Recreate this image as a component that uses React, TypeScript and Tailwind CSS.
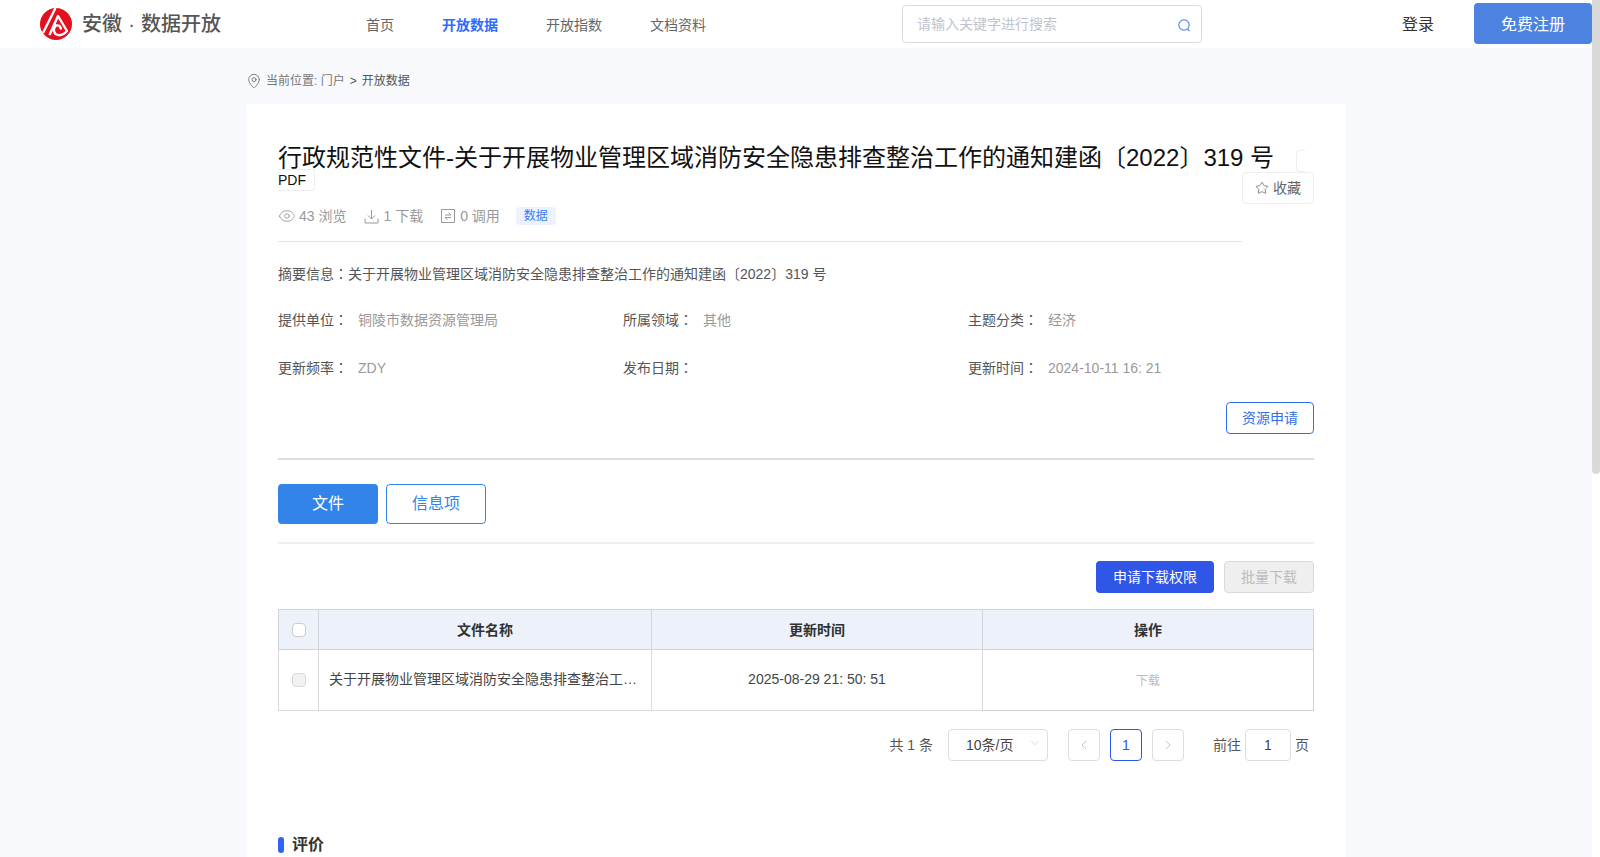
import { Eye, ChevronLeft, ChevronRight, ChevronDown, Star, MapPin } from "lucide-react";

function Logo() {
  return (
    <svg width="32" height="32" viewBox="0 0 32 32" className="shrink-0">
      <circle cx="16" cy="16" r="16" fill="#e60f1e" />
      <path d="M15.5 0 L3 25" stroke="#fff" strokeWidth="2.4" fill="none" />
      <path d="M9.5 27 L18 8 L27 23 Q21 29.5 15.5 26 Q12 21 16 17.5 Q20.5 16.5 21 21.5" stroke="#fff" strokeWidth="2.4" fill="none" strokeLinejoin="round" />
    </svg>
  );
}

function Colon() {
  return <span className="font-['Noto_Sans_CJK_TC']">：</span>;
}

function Info({ label, value }: { label: string; value?: string }) {
  return (
    <div className="flex items-center text-sm">
      <span className="w-20 text-[#555]">
        {label}
        <Colon />
      </span>
      <span className="text-[#999]">{value}</span>
    </div>
  );
}

export default function App() {
  return (
    <div className="flex h-[857px] w-[1600px] overflow-hidden bg-white font-['Liberation_Sans','Noto_Sans_CJK_SC',sans-serif]">
      <div className="flex h-full w-[1592px] flex-col bg-[#f7f9fd]">
        <header className="flex h-12 shrink-0 items-center bg-white pl-10">
          <Logo />
          <div className="ml-2.5 flex w-[136px] items-center text-xl font-medium whitespace-nowrap text-[#555]">
            <span>安徽</span>
            <span className="w-[19px] shrink-0 text-center">·</span>
            <span>数据开放</span>
          </div>
          <nav className="ml-[148px] flex gap-12 pt-0.5 text-sm text-[#666]">
            <span>首页</span>
            <span className="font-bold text-[#2f6bff]">开放数据</span>
            <span>开放指数</span>
            <span>文档资料</span>
          </nav>
          <div className="ml-[196px] flex h-[38px] w-[300px] items-center rounded border border-[#d8dae0] pr-[10px] pl-[14px]">
            <input className="w-full text-sm outline-none placeholder:text-[#c0c4cc]" placeholder="请输入关键字进行搜索" />
            <svg width="14" height="14" viewBox="0 0 14 14" fill="none" stroke="#5b8def" strokeWidth="1.2" className="mt-px shrink-0">
              <circle cx="7" cy="7" r="5.2" />
              <path d="M10.5 11 L12.5 13" />
            </svg>
          </div>
          <span className="ml-[200px] pt-px text-base text-[#333]">登录</span>
          <button className="ml-10 h-[41px] w-[118px] -translate-y-px rounded bg-[#4d83e0] pt-[3px] text-base text-white">免费注册</button>
        </header>

        <div className="ml-[246px] w-[1100px]">
          <div className="flex h-14 items-center pt-[10px] text-xs text-[#777]">
            <MapPin size={16} strokeWidth={1.2} className="mr-[4px] text-[#666]" />
            <span>当前位置: 门户</span>
            <span className="mx-[5px] text-[#555]">&gt;</span>
            <span className="text-[#555]">开放数据</span>
          </div>

          <div className="bg-white px-8 pt-[45px]">
            <h1 className="text-2xl leading-[18px] font-normal text-[#111]">
              行政规范性文件-关于开展物业管理区域消防安全隐患排查整治工作的通知建函〔2022〕319 号{" "}
              <span className="ml-[22px] rounded border border-[#eee] px-2 py-0.5 text-sm leading-none [box-decoration-break:slice]">
                <wbr />
                PDF
              </span>
            </h1>

            <div className="flex items-start justify-between">
              <div className="w-[964px] border-b border-[#e4e4e4] pt-[18px] pb-[14px]">
                <div className="flex h-[22px] items-center text-sm text-[#999]">
                  <Eye size={18} strokeWidth={1.2} className="mr-[3px]" />
                  <span>43 浏览</span>
                  <svg width="15" height="15" viewBox="0 0 15 15" fill="none" stroke="#999" strokeWidth="1" className="mr-1 ml-[18px]">
                    <path d="M7.5 1 V10 M4 6.5 L7.5 10 L11 6.5 M1 9.5 V14 H14 V9.5" />
                  </svg>
                  <span>1 下载</span>
                  <svg width="14" height="14" viewBox="0 0 14 14" fill="none" stroke="#999" strokeWidth="1" className="mr-[5px] ml-[18px]">
                    <path d="M.5.5 H13.5 V13.5 H.5 Z M4 6 H10 L7.5 3.5 M10 8.5 H4 L6.5 11" />
                  </svg>
                  <span>0 调用</span>
                  <span className="ml-4 flex h-[18px] w-10 items-center justify-center rounded-sm bg-[#ecf3ff] text-xs text-[#3b7cf0]">数据</span>
                </div>
              </div>
              <button className="-mt-[15px] flex h-8 w-[72px] items-center justify-center gap-1 rounded-sm border border-[#eee] text-sm text-[#666]">
                <Star size={14} strokeWidth={1.3} />
                收藏
              </button>
            </div>

            <p className="mt-[21px] text-sm leading-5 text-[#555]">
              摘要信息
              <Colon />
              关于开展物业管理区域消防安全隐患排查整治工作的通知建函〔2022〕319 号
            </p>

            <div className="mt-[25px] grid grid-cols-[345px_345px_346px] gap-y-[27px] leading-5">
              <Info label="提供单位" value="铜陵市数据资源管理局" />
              <Info label="所属领域" value="其他" />
              <Info label="主题分类" value="经济" />
              <Info label="更新频率" value="ZDY" />
              <Info label="发布日期" />
              <Info label="更新时间" value="2024-10-11 16: 21" />
            </div>

            <div className="mt-6 flex justify-end border-b-2 border-[#ddd] pb-6">
              <button className="h-8 w-[88px] rounded-sm border border-[#2f6fed] text-sm text-[#2f6fed]">资源申请</button>
            </div>

            <div className="mt-6 flex gap-2 border-b-2 border-[#eee] pb-[18px]">
              <button className="h-10 w-[100px] rounded bg-[#3384e8] text-base text-white">文件</button>
              <button className="h-10 w-[100px] rounded border border-[#3384e8] text-base text-[#3384e8]">信息项</button>
            </div>

            <div className="mt-[17px] flex justify-end gap-2.5">
              <button className="h-8 w-[118px] rounded-sm bg-[#3056e8] text-sm text-white">申请下载权限</button>
              <button className="h-8 w-[90px] rounded-sm border border-[#d9d9d9] bg-[#efefef] text-sm text-[#bbb]">批量下载</button>
            </div>

            <table className="mt-4 w-[1035px] table-fixed border-collapse text-sm">
              <colgroup>
                <col className="w-[40px]" />
                <col className="w-[333px]" />
                <col className="w-[331px]" />
                <col className="w-[331px]" />
              </colgroup>
              <thead>
                <tr className="h-10 bg-[#edf1fa] font-bold text-[#303133]">
                  <th className="border border-[#d0d4dc]">
                    <span className="mx-auto block h-3.5 w-3.5 rounded-sm border border-[#ccc] bg-white" />
                  </th>
                  <th className="border border-[#d0d4dc]">文件名称</th>
                  <th className="border border-[#d0d4dc]">更新时间</th>
                  <th className="border border-[#d0d4dc]">操作</th>
                </tr>
              </thead>
              <tbody>
                <tr className="h-[61px] text-center text-[#444]">
                  <td className="border border-[#d8dae0]">
                    <span className="mx-auto block h-3.5 w-3.5 rounded-sm border border-[#d9d9d9] bg-[#f2f2f2]" />
                  </td>
                  <td className="truncate border border-[#d8dae0] px-2.5 pb-0.5 text-left">关于开展物业管理区域消防安全隐患排查整治工作的通知建函〔2022〕319 号</td>
                  <td className="border border-[#d8dae0] pb-0.5">2025-08-29 21: 50: 51</td>
                  <td className="border border-[#d0d0d0] pt-0.5 text-xs text-[#bbb]">下载</td>
                </tr>
              </tbody>
            </table>

            <div className="mt-[18px] flex h-8 items-center justify-end pr-[5px] text-sm text-[#555]">
              <span>共 1 条</span>
              <div className="relative ml-[15px] flex h-8 w-[100px] items-center rounded border border-[#ddd] pl-[17px] text-[#444]">
                10条/页
                <ChevronDown size={14} strokeWidth={1} className="absolute top-[6px] right-[5px] text-[#bbb]" />
              </div>
              <span className="ml-5 flex h-8 w-8 items-center justify-center rounded border border-[#ddd] text-[#aaa]">
                <ChevronLeft size={16} strokeWidth={1} />
              </span>
              <span className="ml-2.5 flex h-8 w-8 items-center justify-center rounded border border-[#3056e8] text-[#3056e8]">1</span>
              <span className="ml-2.5 flex h-8 w-8 items-center justify-center rounded border border-[#ddd] text-[#aaa]">
                <ChevronRight size={16} strokeWidth={1} />
              </span>
              <span className="ml-[29px]">前往</span>
              <input className="ml-1 h-8 w-[46px] rounded border border-[#ddd] text-center text-sm text-[#444] outline-none" defaultValue="1" />
              <span className="ml-1">页</span>
            </div>

            <div className="mt-[72px] flex h-6 items-center">
              <span className="h-4 w-1.5 rounded-full bg-[#2f62f5]" />
              <span className="ml-2 text-base font-bold text-[#333]">评价</span>
            </div>
          </div>
        </div>
      </div>
      <div className="h-full w-2 bg-white">
        <div className="h-[474px] rounded-b bg-[#d9d9d9]" />
      </div>
    </div>
  );
}
